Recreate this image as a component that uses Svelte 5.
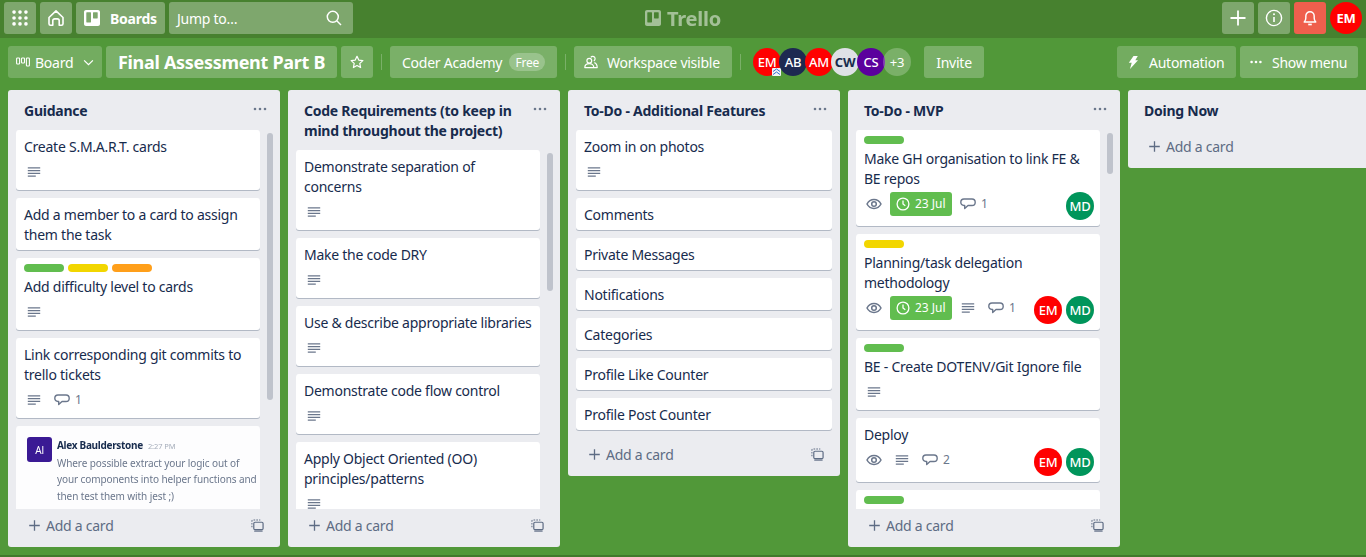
<script>
  const people = {
    EM: "red",
    AB: "navy",
    AM: "red",
    CW: "pale",
    CS: "purple",
    MD: "teal"
  };

  const lists = [
    {
      title: "Guidance",
      thumb: [3, 267],
      cards: [
        { title: "Create S.M.A.R.T. cards", desc: true },
        { title: "Add a member to a card to assign them the task" },
        { title: "Add difficulty level to cards", labels: ["green", "yellow", "orange"], desc: true },
        { title: "Link corresponding git commits to trello tickets", desc: true, comments: 1 },
        { shot: true }
      ]
    },
    {
      title: "Code Requirements (to keep in mind throughout the project)",
      thumb: [3, 138],
      cards: [
        { title: "Demonstrate separation of concerns", desc: true },
        { title: "Make the code DRY", desc: true },
        { title: "Use & describe appropriate libraries", desc: true },
        { title: "Demonstrate code flow control", desc: true },
        { title: "Apply Object Oriented (OO) principles/patterns", desc: true }
      ]
    },
    {
      title: "To-Do - Additional Features",
      cards: [
        { title: "Zoom in on photos", desc: true },
        { title: "Comments" },
        { title: "Private Messages" },
        { title: "Notifications" },
        { title: "Categories" },
        { title: "Profile Like Counter" },
        { title: "Profile Post Counter" }
      ]
    },
    {
      title: "To-Do - MVP",
      thumb: [3, 41],
      cards: [
        { title: "Make GH organisation to link FE & BE repos", labels: ["green"], watch: true, due: "23 Jul", comments: 1, members: ["MD"] },
        { title: "Planning/task delegation methodology", labels: ["yellow"], watch: true, due: "23 Jul", desc: true, comments: 1, members: ["EM", "MD"] },
        { title: "BE - Create DOTENV/Git Ignore file", labels: ["green"], desc: true },
        { title: "Deploy", watch: true, desc: true, comments: 2, members: ["EM", "MD"] },
        { title: "", labels: ["green"] }
      ]
    },
    { title: "Doing Now", cards: [] }
  ];

  const boardMembers = ["EM", "AB", "AM", "CW", "CS"];
</script>

{#snippet descIcon()}
  <svg class="ico" viewBox="0 0 20 20"><path d="M3.800 5.800h12.400M3.800 8.600h12.400M3.800 11.400h12.400M3.800 14.200h8" stroke="currentColor" stroke-width="1.200" fill="none"/></svg>
{/snippet}

{#snippet eyeIcon()}
  <svg class="ico" viewBox="0 0 20 20" fill="none" stroke="currentColor" stroke-width="1.500"><path d="M3 10c1.600-3 4-4.500 7-4.500s5.400 1.500 7 4.500c-1.600 3-4 4.500-7 4.500S4.600 13 3 10z"/><circle cx="10" cy="10" r="2.300"/></svg>
{/snippet}

{#snippet commentIcon()}
  <svg class="ico" viewBox="0 0 20 20" fill="none" stroke="currentColor" stroke-width="1.400"><path d="M6 5h8c2 0 3.200 1.300 3.200 3.200S16 11.500 14 11.500h-4l-3.300 3v-3H6c-2 0-3.200-1.300-3.200-3.300S4 5 6 5z" stroke-linejoin="round"/></svg>
{/snippet}

{#snippet plusIcon()}
  <svg class="plus" viewBox="0 0 16 16"><path d="M8 1.500v13M1.500 8h13" stroke="currentColor" stroke-width="1.600" fill="none"/></svg>
{/snippet}

{#snippet templateIcon()}
  <svg class="template" viewBox="0 0 14 14" fill="none" stroke="currentColor"><path d="M1 9V2.200C1 1.500 1.500 1 2.200 1H10" stroke-width="1.100" stroke-dasharray="1.800 1.200"/><rect x="3" y="3.500" width="10" height="8" rx="1.300" stroke-width="1.300"/><path d="M3.500 13h9" stroke-width="1.300"/></svg>
{/snippet}

{#snippet dotsIcon()}
  <svg class="dots" viewBox="0 0 14 4" fill="currentColor"><circle cx="2" cy="2" r="1.300"/><circle cx="7" cy="2" r="1.300"/><circle cx="12" cy="2" r="1.300"/></svg>
{/snippet}

{#snippet boardsLogo(cls)}
  <svg class={cls} viewBox="0 0 16 16"><path fill-rule="evenodd" fill="currentColor" d="M2 0h12c1.100 0 2 .9 2 2v12c0 1.100-.9 2-2 2H2c-1.100 0-2-.9-2-2V2C0 .9.900 0 2 0zm.8 2.300c-.3 0-.5.200-.5.500v9.200c0 .3.200.5.500.5h3.700c.3 0 .5-.2.500-.5V2.800c0-.3-.2-.5-.5-.5H2.800zm6.700 0c-.3 0-.5.200-.5.500v5.200c0 .3.200.5.500.5h3.700c.3 0 .5-.2.500-.5V2.800c0-.3-.2-.5-.5-.5H9.500z"/></svg>
{/snippet}

<div class="page">
  <header class="topbar">
    <button class="tb square" aria-label="Apps">
      <svg class="i16" viewBox="0 0 14 14" fill="currentColor">
        {#each [1.800, 7, 12.200] as y}
          {#each [1.800, 7, 12.200] as x}
            <circle cx={x} cy={y} r="1.600"/>
          {/each}
        {/each}
      </svg>
    </button>
    <button class="tb square" aria-label="Home">
      <svg class="i18" viewBox="0 0 18 18" fill="none" stroke="currentColor" stroke-width="1.600" stroke-linejoin="round"><path d="M2 8.500 9 1.800l7 6.700v6.200c0 .9-.6 1.500-1.500 1.500h-2.300v-4.400c0-1.100-.8-1.900-1.900-1.900H7.700c-1.100 0-1.900.8-1.900 1.900v4.400H3.500c-.9 0-1.500-.6-1.500-1.500z"/></svg>
    </button>
    <button class="tb boards">
      {@render boardsLogo("i16")}
      <b>Boards</b>
    </button>
    <div class="tb search">
      <span>Jump to…</span>
      <svg class="i16" viewBox="0 0 16 16" fill="none" stroke="currentColor" stroke-width="1.500"><circle cx="6.800" cy="6.800" r="5.500"/><path d="m11 11 4 4"/></svg>
    </div>

    <div class="logo">
      {@render boardsLogo("logo-mark")}
      <span>Trello</span>
    </div>

    <button class="tb square" aria-label="Create">
      <svg class="i16" viewBox="0 0 16 16"><path d="M8 .5v15M.5 8h15" stroke="currentColor" stroke-width="1.800" fill="none"/></svg>
    </button>
    <button class="tb square" aria-label="Information">
      <svg class="i18" viewBox="0 0 18 18" fill="none" stroke="currentColor" stroke-width="1.400"><circle cx="9" cy="9" r="7.600"/><path d="M9 8v5" stroke-width="1.600"/><circle cx="9" cy="5.300" r="1" fill="currentColor" stroke="none"/></svg>
    </button>
    <button class="tb square bell" aria-label="Notifications">
      <svg class="i16" viewBox="0 0 16 18" fill="none" stroke="currentColor" stroke-width="1.600" stroke-linejoin="round"><path d="M1.500 13.500h13c-1.300-1.300-1.800-2.400-1.800-4.500V6.800C12.700 4 10.700 2 8 2S3.300 4 3.300 6.800V9c0 2.100-.5 3.200-1.800 4.500z"/><path d="M6 16.300h4" stroke-width="1.900"/></svg>
    </button>
    <span class="me">EM</span>
  </header>

  <nav class="boardbar">
    <button class="bb view">
      <svg class="viewicon" viewBox="0 0 14 10" fill="none" stroke="currentColor" stroke-width="1.100"><rect x=".6" y="1" width="3" height="6" rx=".8"/><rect x="5.500" y="1" width="3" height="5" rx=".8"/><rect x="10.400" y="1" width="3" height="8" rx=".8"/></svg>
      <span>Board</span>
      <svg class="chev" viewBox="0 0 12 8" fill="none" stroke="currentColor" stroke-width="1.400"><path d="m1 1.500 5 5 5-5"/></svg>
    </button>
    <button class="bb title">Final Assessment Part B</button>
    <button class="bb star" aria-label="Star">
      <svg class="i14" viewBox="0 0 16 16" fill="none" stroke="currentColor" stroke-width="1.400" stroke-linejoin="round"><path d="m8 1.500 2 4.300 4.700.6-3.500 3.200.9 4.700L8 12l-4.100 2.300.9-4.700L1.300 6.400 6 5.800z"/></svg>
    </button>
    <i class="divider"></i>
    <button class="bb workspace">
      <span>Coder Academy</span>
      <span class="free">Free</span>
    </button>
    <i class="divider"></i>
    <button class="bb visible">
      <svg class="i14" viewBox="0 0 14 14" fill="none" stroke="currentColor" stroke-width="1.200" stroke-linejoin="round"><circle cx="5.300" cy="5.800" r="2.400"/><path d="M.8 12.600c0-2.500 2-4 4.500-4s4.500 1.500 4.500 4z"/><path d="M6.800 2.300a2.400 2.400 0 1 1 3 3.600M10.300 7.600c1.700.5 2.900 2.300 2.900 5h-3.400"/></svg>
      <span>Workspace visible</span>
    </button>
    <i class="divider"></i>
    <div class="members">
      {#each boardMembers as m, i}
        <span class="face {people[m]}">
          {m}
          {#if i === 0}
            <svg class="admin" viewBox="0 0 9 8" fill="none" stroke="#2f6fd0" stroke-width="1"><rect width="9" height="8" rx="1" fill="#f2f4f8" stroke="none"/><path d="m1 3.500 3.500-2.500L8 3.500M1 6.500 4.500 4 8 6.500"/></svg>
          {/if}
        </span>
      {/each}
      <span class="face more">+3</span>
    </div>
    <button class="bb invite">Invite</button>

    <button class="bb automation">
      <svg class="bolt" viewBox="0 0 10 13" fill="currentColor"><path d="M5.500 0h4.300L7.300 4.200H10L2 13l1.700-6.300H.8z"/></svg>
      <span>Automation</span>
    </button>
    <button class="bb showmenu">
      <svg class="menudots" viewBox="0 0 12 4" fill="currentColor"><circle cx="1.600" cy="2" r="1.300"/><circle cx="6" cy="2" r="1.300"/><circle cx="10.400" cy="2" r="1.300"/></svg>
      <span>Show menu</span>
    </button>
  </nav>

  <main class="board">
    {#each lists as list}
      <section class="list">
        <div class="list-head">
          <h2>{list.title}</h2>
          {#if list.cards.length}
            <span class="list-menu">{@render dotsIcon()}</span>
          {/if}
        </div>
        {#if list.cards.length}
          <div class="list-body">
            <div class="cards">
              {#each list.cards as card}
                <article class="card" class:shot-card={card.shot}>
                  {#if card.shot}
                    <div class="shot">
                      <span class="shot-avatar">Al</span>
                      <div class="shot-text">
                        <p class="shot-name"><b>Alex Baulderstone</b><small>2:27 PM</small></p>
                        <p>Where possible extract your logic out of</p>
                        <p>your components into helper functions and</p>
                        <p>then test them with jest ;)</p>
                      </div>
                    </div>
                  {:else}
                    {#if card.labels}
                      <div class="labels">
                        {#each card.labels as l}
                          <span class="label {l}"></span>
                        {/each}
                      </div>
                    {/if}
                    <div class="card-title">{card.title}</div>
                    {#if card.desc || card.watch || card.comments}
                      <div class="badges">
                        {#if card.watch}
                          <span class="badge">{@render eyeIcon()}</span>
                        {/if}
                        {#if card.due}
                          <span class="due">
                            <svg class="clock" viewBox="0 0 14 14" fill="none" stroke="currentColor" stroke-width="1.300"><circle cx="7" cy="7" r="5.900"/><path d="M7 3.500V7l2.300 1.800"/></svg>
                            {card.due}
                          </span>
                        {/if}
                        {#if card.desc}
                          <span class="badge">{@render descIcon()}</span>
                        {/if}
                        {#if card.comments}
                          <span class="badge comment">{@render commentIcon()}<em>{card.comments}</em></span>
                        {/if}
                        {#if card.members}
                          <span class="card-members">
                            {#each card.members as m}
                              <span class="face {people[m]}">{m}</span>
                            {/each}
                          </span>
                        {/if}
                      </div>
                    {/if}
                  {/if}
                </article>
              {/each}
            </div>
            {#if list.thumb}
              <div class="track">
                <div class="thumb" style="margin-top:{list.thumb[0]}px;height:{list.thumb[1]}px"></div>
              </div>
            {/if}
          </div>
        {/if}
        <div class="list-foot">
          <span class="add">{@render plusIcon()}Add a card</span>
          {#if list.cards.length}
            {@render templateIcon()}
          {/if}
        </div>
      </section>
    {/each}
  </main>
  <div class="strip"></div>
</div>

<style>
  :global(body) {
    margin: 0;
    overflow: hidden;
  }
  .page {
    width: 1366px;
    height: 557px;
    display: flex;
    flex-direction: column;
    overflow: hidden;
    background: #519839;
    font-family: "Noto Sans", "Open Sans", sans-serif;
    font-size: 14px;
    letter-spacing: -0.25px;
    color: #172b4d;
  }
  button {
    border: none;
    margin: 0;
    font: inherit;
    letter-spacing: inherit;
    color: #fff;
    padding: 0;
  }
  svg {
    display: block;
    flex: none;
  }
  .i14 { width: 14px; height: 14px; }
  .i16 { width: 16px; height: 16px; }
  .i18 { width: 18px; height: 18px; }

  .topbar {
    height: 38px;
    flex: none;
    box-sizing: border-box;
    padding: 2px 4px 4px;
    display: flex;
    align-items: center;
    gap: 4px;
    background: #47812f;
    color: #fff;
  }
  .tb {
    height: 32px;
    border-radius: 3px;
    background: rgba(255, 255, 255, 0.3);
    display: flex;
    align-items: center;
    color: #fff;
    box-sizing: border-box;
  }
  .square {
    width: 32px;
    justify-content: center;
  }
  .boards {
    width: 89px;
    padding-left: 8px;
    gap: 10px;
  }
  .boards b {
    font-size: 14px;
  }
  .search {
    width: 184px;
    padding: 0 11px 0 8px;
    justify-content: space-between;
  }
  .bell {
    background: #ef5f4d;
  }
  .me {
    width: 32px;
    height: 32px;
    border-radius: 50%;
    background: #f00;
    font-weight: 700;
    font-size: 13px;
    display: flex;
    align-items: center;
    justify-content: center;
  }
  .logo {
    flex: 1;
    display: flex;
    align-items: center;
    justify-content: center;
    gap: 6px;
    opacity: 0.5;
    font-size: 20px;
    font-weight: 700;
    padding-right: 209px;
  }
  .logo-mark {
    width: 16px;
    height: 16px;
  }

  .boardbar {
    height: 52px;
    flex: none;
    box-sizing: border-box;
    padding: 8px 8px 12px;
    display: flex;
    align-items: center;
    gap: 4px;
  }
  .bb {
    height: 32px;
    border-radius: 3px;
    background: rgba(255, 255, 255, 0.24);
    display: flex;
    align-items: center;
    box-sizing: border-box;
    flex: none;
  }
  .view {
    width: 94px;
    padding-left: 8px;
    background: rgba(255, 255, 255, 0.2);
  }
  .viewicon {
    width: 14px;
    height: 10px;
    margin-right: 5px;
  }
  .chev {
    width: 11px;
    height: 7px;
    margin-left: 10px;
  }
  .title {
    width: 231px;
    justify-content: center;
    font-size: 18px;
    font-weight: 700;
    letter-spacing: -0.3px;
  }
  .star {
    width: 32px;
    justify-content: center;
  }
  .divider {
    width: 1px;
    height: 16px;
    margin: 0 4px;
    background: rgba(255, 255, 255, 0.24);
  }
  .workspace {
    width: 167px;
    padding-left: 12px;
    gap: 7px;
  }
  .free {
    height: 18px;
    width: 36px;
    border-radius: 9px;
    background: rgba(255, 255, 255, 0.24);
    font-size: 12px;
    display: flex;
    align-items: center;
    justify-content: center;
  }
  .visible {
    width: 158px;
    padding-left: 10px;
    gap: 9px;
  }
  .members {
    display: flex;
    margin-left: 4px;
    color: #fff;
  }
  .members .face {
    margin-right: -2px;
  }
  .face {
    position: relative;
    width: 28px;
    height: 28px;
    border-radius: 50%;
    display: flex;
    align-items: center;
    justify-content: center;
    font-size: 13px;
    font-weight: 500;
    color: #fff;
    flex: none;
  }
  .red { background: #f00; }
  .navy { background: #1d2951; }
  .pale { background: #dfe1e6; color: #172b4d; font-weight: 700; }
  .purple { background: #5b009d; }
  .teal { background: #00955b; }
  .more {
    background: rgba(255, 255, 255, 0.24);
    font-weight: 400;
  }
  .admin {
    position: absolute;
    right: 0;
    bottom: 0;
    width: 9px;
    height: 8px;
  }
  .invite {
    width: 60px;
    justify-content: center;
    margin-left: 11px;
    margin-right: auto;
  }
  .automation {
    width: 119px;
    padding-left: 11px;
    gap: 11px;
    background: rgba(255, 255, 255, 0.2);
  }
  .bolt {
    width: 10px;
    height: 13px;
  }
  .showmenu {
    width: 118px;
    padding-left: 10px;
    gap: 10px;
  }
  .menudots {
    width: 12px;
    height: 4px;
  }

  .board {
    flex: 1;
    min-height: 0;
    display: flex;
    align-items: flex-start;
    gap: 8px;
    padding: 0 0 10px 8px;
    overflow: hidden;
  }
  .list {
    width: 272px;
    flex: none;
    max-height: 100%;
    display: flex;
    flex-direction: column;
    background: #ebecf0;
    border-radius: 3px;
    padding-bottom: 6px;
    box-sizing: border-box;
  }
  .list-head {
    flex: none;
    display: flex;
    justify-content: space-between;
    padding: 11px 13px 9px 16px;
  }
  .list-head h2 {
    margin: 0;
    font-size: 14px;
    line-height: 20px;
    font-weight: 700;
    width: 220px;
  }
  .list-menu {
    color: #6b778c;
  }
  .dots {
    width: 14px;
    height: 4px;
    margin-top: 6px;
  }
  .list-body {
    flex: 1;
    min-height: 0;
    display: flex;
    overflow: hidden;
    padding: 0 8px;
  }
  .cards {
    flex: 1;
    min-width: 0;
    display: flex;
    flex-direction: column;
    gap: 8px;
    padding-bottom: 8px;
  }
  .track {
    flex: none;
    width: 6px;
    margin: 0 -1px 0 7px;
  }
  .thumb {
    background: #bfc3cc;
    border-radius: 3px;
  }
  .card {
    flex: none;
    background: #fff;
    border-radius: 3px;
    box-shadow: 0 1px 0 rgba(9, 30, 66, 0.25);
    padding: 6px 6px 6px 8px;
    line-height: 20px;
  }
  .card-title {
    min-height: 20px;
    position: relative;
    top: 1px;
  }
  .labels {
    display: flex;
    gap: 4px;
    margin-bottom: 4px;
  }
  .label {
    width: 40px;
    height: 8px;
    border-radius: 4px;
  }
  .green { background: #61bd4f; }
  .yellow { background: #f2d600; }
  .orange { background: #ff9f1a; }
  .badges {
    display: flex;
    align-items: flex-start;
    min-height: 24px;
    margin-top: 4px;
    color: #6b778c;
  }
  .badge {
    display: flex;
    align-items: center;
    height: 24px;
    margin-right: 8px;
    font-size: 12px;
  }
  .badge em {
    font-style: normal;
    margin-left: 3px;
  }
  .ico {
    width: 20px;
    height: 20px;
  }
  .due {
    display: flex;
    align-items: center;
    gap: 5px;
    width: 62px;
    height: 24px;
    box-sizing: border-box;
    padding-left: 6px;
    margin: 0 6px 0 -2px;
    background: #61bd4f;
    border-radius: 3px;
    color: #fff;
    font-size: 12px;
    letter-spacing: 0;
  }
  .clock {
    width: 14px;
    height: 14px;
  }
  .card-members {
    display: flex;
    gap: 4px;
    margin-left: auto;
  }

  .shot-card {
    height: 120px;
    background: #fdfdfe;
    padding: 11px 0 0 11px;
    box-sizing: border-box;
  }
  .shot {
    display: flex;
    gap: 5px;
    filter: blur(0.3px);
  }
  .shot-avatar {
    width: 25px;
    height: 25px;
    flex: none;
    border-radius: 3px;
    background: #3a1a94;
    color: #fff;
    font-size: 10px;
    display: flex;
    align-items: center;
    justify-content: center;
  }
  .shot-text {
    font-size: 10px;
    line-height: 16.500px;
    letter-spacing: -0.1px;
    color: #6b778c;
    white-space: nowrap;
  }
  .shot-text p {
    margin: 0;
  }
  .shot-name {
    color: #172b4d;
    margin-top: -1px;
  }
  .shot-name b {
    letter-spacing: -0.3px;
  }
  .shot-name small {
    font-size: 7.500px;
    color: #a5adba;
    margin-left: 5px;
  }

  .list-foot {
    flex: none;
    height: 32px;
    display: flex;
    align-items: center;
    justify-content: space-between;
    padding: 0 16px 0 20px;
    color: #5e6c84;
  }
  .add {
    display: flex;
    align-items: center;
    gap: 5px;
  }
  .plus {
    width: 13px;
    height: 13px;
  }
  .template {
    width: 13px;
    height: 13px;
  }
  .strip {
    height: 2px;
    flex: none;
    background: #41792c;
    margin-top: -2px;
    position: relative;
  }
</style>
